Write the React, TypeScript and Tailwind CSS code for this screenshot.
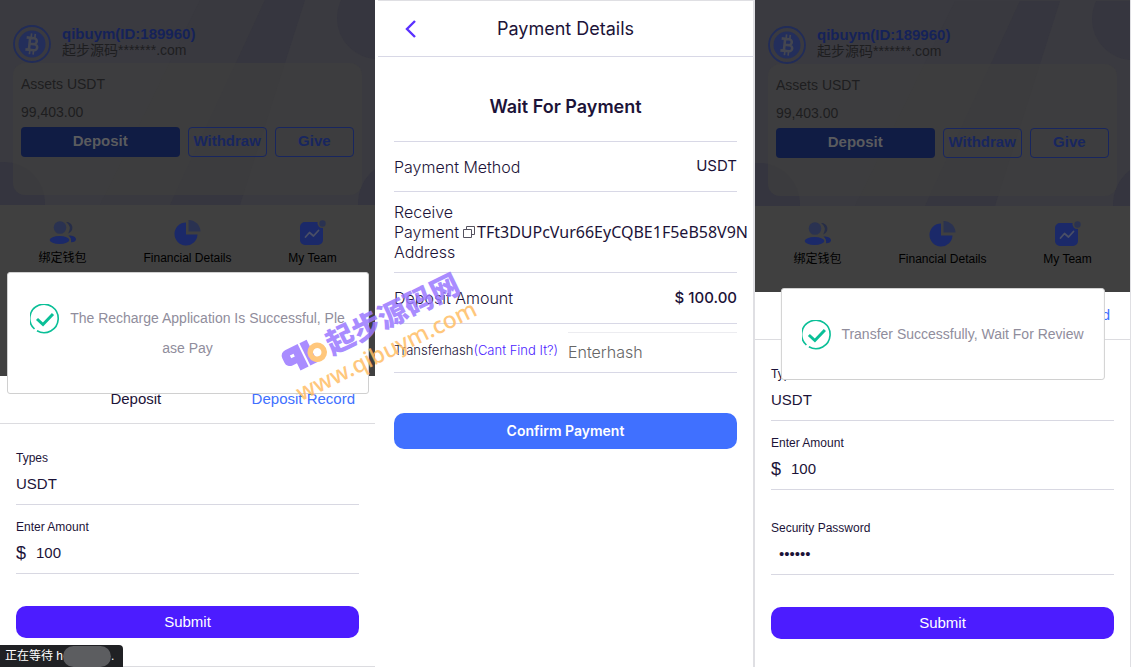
import { useId } from 'react'
import type { ReactNode } from 'react'

const menuItems = [
  { label: '绑定钱包', icon: <UsersIcon /> },
  { label: 'Financial Details', icon: <PieIcon /> },
  { label: 'My Team', icon: <TrendIcon /> },
]

function BitcoinIcon() {
  return (
    <svg width="38" height="38" viewBox="0 0 38 38" fill="none" aria-hidden="true">
      <circle cx="19" cy="19" r="18" stroke="#212c58" strokeWidth="1.800" />
      <circle cx="19" cy="19" r="13.500" fill="#232e5b" />
      <g stroke="#444650" strokeWidth="2.600" strokeLinejoin="round" transform="rotate(6 19 19)">
        <path d="M16.500 13v12M13 13h7.500a3 3 0 0 1 0 6H17h4.500a3 3 0 0 1 0 6H13" />
        <path d="M17.500 8.500V13M21.200 8.500V13M17.500 25v4.500M21.200 25v4.500" strokeWidth="1.700" />
      </g>
    </svg>
  )
}

function UsersIcon() {
  return (
    <svg width="28" height="26" viewBox="0 0 28 26" aria-hidden="true">
      <path d="M17 2a5.800 5.800 0 0 1 2 11.400c1.200-1.600 1.800-3.700 1.800-5.700S19 3.500 17 2Z" fill="#262d48" />
      <path d="M19.500 15.500c4.500 0 7.500 1.500 7.500 3.800 0 2-2 3-5 3 .5-3-.200-5-2.500-6.800Z" fill="#1a2764" />
      <circle cx="11" cy="7.500" r="6.300" fill="#2a3251" />
      <ellipse cx="10.500" cy="20" rx="9.800" ry="4" fill="#1b2969" />
    </svg>
  )
}

function PieIcon() {
  return (
    <svg width="28" height="26" viewBox="0 0 28 26" aria-hidden="true">
      <path d="M12 2.500v12h11.500A11.500 11.500 0 1 1 12 2.500Z" fill="#1b2969" />
      <path d="M14.500 0A12 12 0 0 1 26.500 11.500h-12Z" fill="#2a3251" />
    </svg>
  )
}

function TrendIcon() {
  return (
    <svg width="28" height="26" viewBox="0 0 28 26" aria-hidden="true">
      <path
        d="M6 2h12.500a5 5 0 0 0 5.500 6V20a5 5 0 0 1-5 5H6a5 5 0 0 1-5-5V7a5 5 0 0 1 5-5Z"
        fill="#1b2969"
      />
      <path d="m6.500 17 4-4.500 4 3.500 5-5.500" fill="none" stroke="#4a4f66" strokeWidth="1.800" strokeLinecap="round" strokeLinejoin="round" />
      <circle cx="23.500" cy="3.500" r="3.200" fill="#2a3251" />
    </svg>
  )
}

function SuccessIcon() {
  return (
    <svg width="30" height="30" viewBox="0 0 30 30" fill="none" className="-my-1 mr-2.5 inline-block align-middle" aria-hidden="true">
      <path d="M4.500 25A14.200 14.200 0 1 1 7 26.800" stroke="#0abf97" strokeWidth="1.600" />
      <path d="m7 15 6 5.500L23 10" stroke="#0abf97" strokeWidth="3" />
    </svg>
  )
}

function HeroArt() {
  return (
    <svg className="absolute inset-0 h-full w-full" viewBox="0 0 375 205" preserveAspectRatio="none" aria-hidden="true">
      <rect width="375" height="205" fill="#3a3a40" />
      <path d="M200 0h65L175 205H100Z" fill="#39393f" />
      <path d="M265 0h40L240 205H170Z" fill="#36363f" />
      <circle cx="378" cy="18" r="41" fill="#36363f" />
      <circle cx="4" cy="203" r="41" fill="#35353f" />
      <circle cx="400" cy="203" r="42" fill="#35353f" />
    </svg>
  )
}

function AccountPage() {
  return (
    <div className="flex-1 overflow-hidden bg-[#404040] text-[#141414]">
      <div className="relative h-[205px] px-[13px] pt-[25px]">
        <HeroArt />
        <div className="relative flex items-center gap-[11px]">
          <BitcoinIcon />
          <div className="pb-1">
            <div className="text-[15px] leading-[17px] font-bold text-[#152259]">qibuym(ID:189960)</div>
            <div className="text-sm leading-[17px] text-[#1e1e20]">起步源码*******.com</div>
          </div>
        </div>
        <div className="relative h-[132px] rounded-xl bg-[#3e3e3e]/70 px-2 pt-[7px]">
          <div className="text-sm leading-7 text-[#1e1e20]">Assets USDT</div>
          <div className="text-sm leading-7 text-[#1e1e20]">99,403.00</div>
          <div className="mt-px grid grid-cols-[2fr_1fr_1fr] gap-2 text-[15px] font-bold text-[#18265f]">
            <button className="h-[30px] rounded bg-[#101c44] pb-0.5 text-[#5a5b5e]">Deposit</button>
            <button className="h-[30px] rounded border border-[#18265f] pb-0.5">Withdraw</button>
            <button className="h-[30px] rounded border border-[#18265f] pb-0.5">Give</button>
          </div>
        </div>
      </div>
      <nav className="grid grid-cols-3 pt-[15px] text-xs text-black">
        {menuItems.map((item) => (
          <a key={item.label} href="#" className="flex flex-col items-center gap-1">
            {item.icon}
            <span>{item.label}</span>
          </a>
        ))}
      </nav>
    </div>
  )
}

function SheetHeader({ title, link }: { title: string; link: string }) {
  return (
    <div className="flex h-12 items-center border-b border-[#dcdce0] px-5 text-[15px]">
      <h2 className="flex-1 text-center">{title}</h2>
      <a href="#" className="text-[#4070ff]">
        {link}
      </a>
    </div>
  )
}

function Field({ label, children }: { label: string; children: (id: string) => ReactNode }) {
  const id = useId()
  return (
    <div className="border-b border-[#d8d8e2] pt-3.5">
      <label htmlFor={id} className="block text-xs leading-4">
        {label}
      </label>
      <div className="flex h-[38px] items-center pb-0.5 text-[15px]">{children(id)}</div>
    </div>
  )
}

function TypeField() {
  return (
    <Field label="Types">
      {(id) => (
        <select id={id} className="w-full appearance-none bg-transparent outline-none">
          <option>USDT</option>
        </select>
      )}
    </Field>
  )
}

function AmountField() {
  return (
    <Field label="Enter Amount">
      {(id) => (
        <>
          <span className="mr-2.5 text-lg leading-5">$</span>
          <input id={id} defaultValue="100" className="min-w-0 flex-1 bg-transparent outline-none" />
        </>
      )}
    </Field>
  )
}

function SubmitButton() {
  return (
    <button className="mt-8 h-8 w-full rounded-[10px] bg-[#4c1cff] text-[15px] text-white">Submit</button>
  )
}

function Toast({ children }: { children: ReactNode }) {
  return (
    <div
      role="alert"
      className="absolute top-1/2 left-1/2 w-max max-w-[362px] -translate-x-1/2 -translate-y-1/2 rounded-[3px] border border-[#d0d0d0] bg-white px-5 py-[30px] text-center text-sm leading-[30px] break-all text-[#908d9c]"
    >
      <SuccessIcon />
      {children}
    </div>
  )
}

function DepositScreen() {
  return (
    <section className="relative flex flex-col border-b border-[#dcdce0]">
      <AccountPage />
      <div className="bg-white pb-7">
        <SheetHeader title="Deposit" link="Deposit Record" />
        <form className="mt-3 px-4">
          <TypeField />
          <AmountField />
          <SubmitButton />
        </form>
      </div>
      <Toast>The Recharge Application Is Successful, Please Pay</Toast>
      <div className="absolute -bottom-px left-0 flex h-[22px] w-[123px] items-center rounded-tr bg-[#202124] pl-[5px] text-xs text-white">
        <span>正在等待 h</span>
        <span className="h-[21px] w-12 rounded-full bg-[#5c5d60]" />
        <span>.</span>
      </div>
    </section>
  )
}

function GiveScreen() {
  return (
    <section className="relative flex flex-col border-x border-[#dfdfe3]">
      <div className="flex flex-1 flex-col bg-[#3a3a40] pt-px">
        <AccountPage />
      </div>
      <div className="bg-white pb-7">
        <SheetHeader title="Give" link="Give Record" />
        <form className="mt-3 px-4">
          <TypeField />
          <AmountField />
          <div className="mt-4">
            <Field label="Security Password">
              {(id) => (
                <input
                  id={id}
                  type="password"
                  defaultValue="123456"
                  autoComplete="off"
                  className="w-full bg-transparent pl-2 outline-none"
                />
              )}
            </Field>
          </div>
          <SubmitButton />
        </form>
      </div>
      <Toast>Transfer Successfully, Wait For Review</Toast>
    </section>
  )
}

function PaymentScreen() {
  return (
    <section className="ml-[3px] overflow-hidden border-t border-r border-[#dfdfe3] font-['Inter',sans-serif] text-base">
      <header className="grid h-14 grid-cols-[1fr_auto_1fr] items-center border-b border-[#d8d8e6] px-4">
        <button aria-label="Back" className="flex size-8 items-center justify-center">
          <svg width="12" height="18" viewBox="0 0 12 18" fill="none" aria-hidden="true">
            <path d="M11 1 3 9l8 8" stroke="#5a30ff" strokeWidth="2.400" />
          </svg>
        </button>
        <h1 className="text-lg">Payment Details</h1>
      </header>
      <div className="px-4">
        <h2 className="border-b border-[#d8d8e6] pt-9 pb-5 text-center text-lg leading-7 font-semibold">
          Wait For Payment
        </h2>
        <div className="flex h-[50px] items-center justify-between border-b border-[#d8d8e6]">
          <span className="font-light">Payment Method</span>
          <span className="text-[15px]">USDT</span>
        </div>
        <div className="flex h-[81px] items-center border-b border-[#d8d8e6]">
          <span className="w-[69px] shrink-0 leading-5 font-light">Receive Payment Address</span>
          <button aria-label="Copy address" className="mr-0.5 shrink-0">
            <svg width="12" height="12" viewBox="0 0 12 12" fill="none" stroke="#55525f" aria-hidden="true">
              <path d="M.5 3.500h8v8h-8ZM3.500 3V.5h8v8H9" />
            </svg>
          </button>
          <span className="font-['Noto_Sans',sans-serif] whitespace-nowrap">TFt3DUPcVur66EyCQBE1F5eB58V9N</span>
        </div>
        <div className="flex h-[51px] items-center justify-between border-b border-[#d8d8e6]">
          <span className="font-light">Deposit Amount</span>
          <span className="text-[15px] font-medium">$ 100.00</span>
        </div>
        <div className="flex border-b border-[#d8d8e6] pt-2">
          <div className="flex w-[174px] shrink-0 items-center pb-0.5 text-[13px] font-light whitespace-nowrap">
            <label htmlFor="hash">Transferhash</label>
            <a href="#" className="text-[#4c1cff]">
              (Cant Find It?)
            </a>
          </div>
          <input
            id="hash"
            placeholder="Enterhash"
            className="h-10 min-w-0 flex-1 border-t border-[#ececf0] pb-0.5 font-light outline-none placeholder:text-[#666]"
          />
        </div>
        <button className="mt-10 h-9 w-full rounded-[10px] bg-[#4070ff] text-sm font-semibold text-white">
          Confirm Payment
        </button>
      </div>
    </section>
  )
}

function Watermark() {
  return (
    <div className="pointer-events-none absolute top-[303px] left-[280px] w-[200px] -rotate-[26deg] opacity-85">
      <div className="flex h-8 items-center">
        <svg width="48" height="30" viewBox="0 0 48 30" fill="none" className="shrink-0" aria-hidden="true">
          <path d="M22 3H8a6 6 0 0 0-6 6v5a6 6 0 0 0 6 6h5v8h9Z" fill="#9b79ff" />
          <path d="M10 10h4v3h-4Z" fill="#fff" />
          <path d="M24 3h8v25h-8Z" fill="#9b79ff" />
          <circle cx="36" cy="19" r="7" stroke="#ffbe66" strokeWidth="5.500" />
        </svg>
        <span className="font-['Noto_Sans_CJK_SC',sans-serif] text-[29px] leading-8 font-black whitespace-nowrap text-[#9b79ff]">
          起步源码网
        </span>
      </div>
      <div className="font-['Noto_Sans',sans-serif] text-[23px] leading-8 font-medium text-[#ffbe66]">www.qibuym.com</div>
    </div>
  )
}

export default function App() {
  return (
    <main className="relative grid min-h-screen grid-cols-[375fr_379fr_377fr] overflow-hidden bg-white pr-[3px] font-['Liberation_Sans','Noto_Sans_CJK_SC',sans-serif] text-[#1c1338]">
      <DepositScreen />
      <PaymentScreen />
      <GiveScreen />
      <Watermark />
    </main>
  )
}
